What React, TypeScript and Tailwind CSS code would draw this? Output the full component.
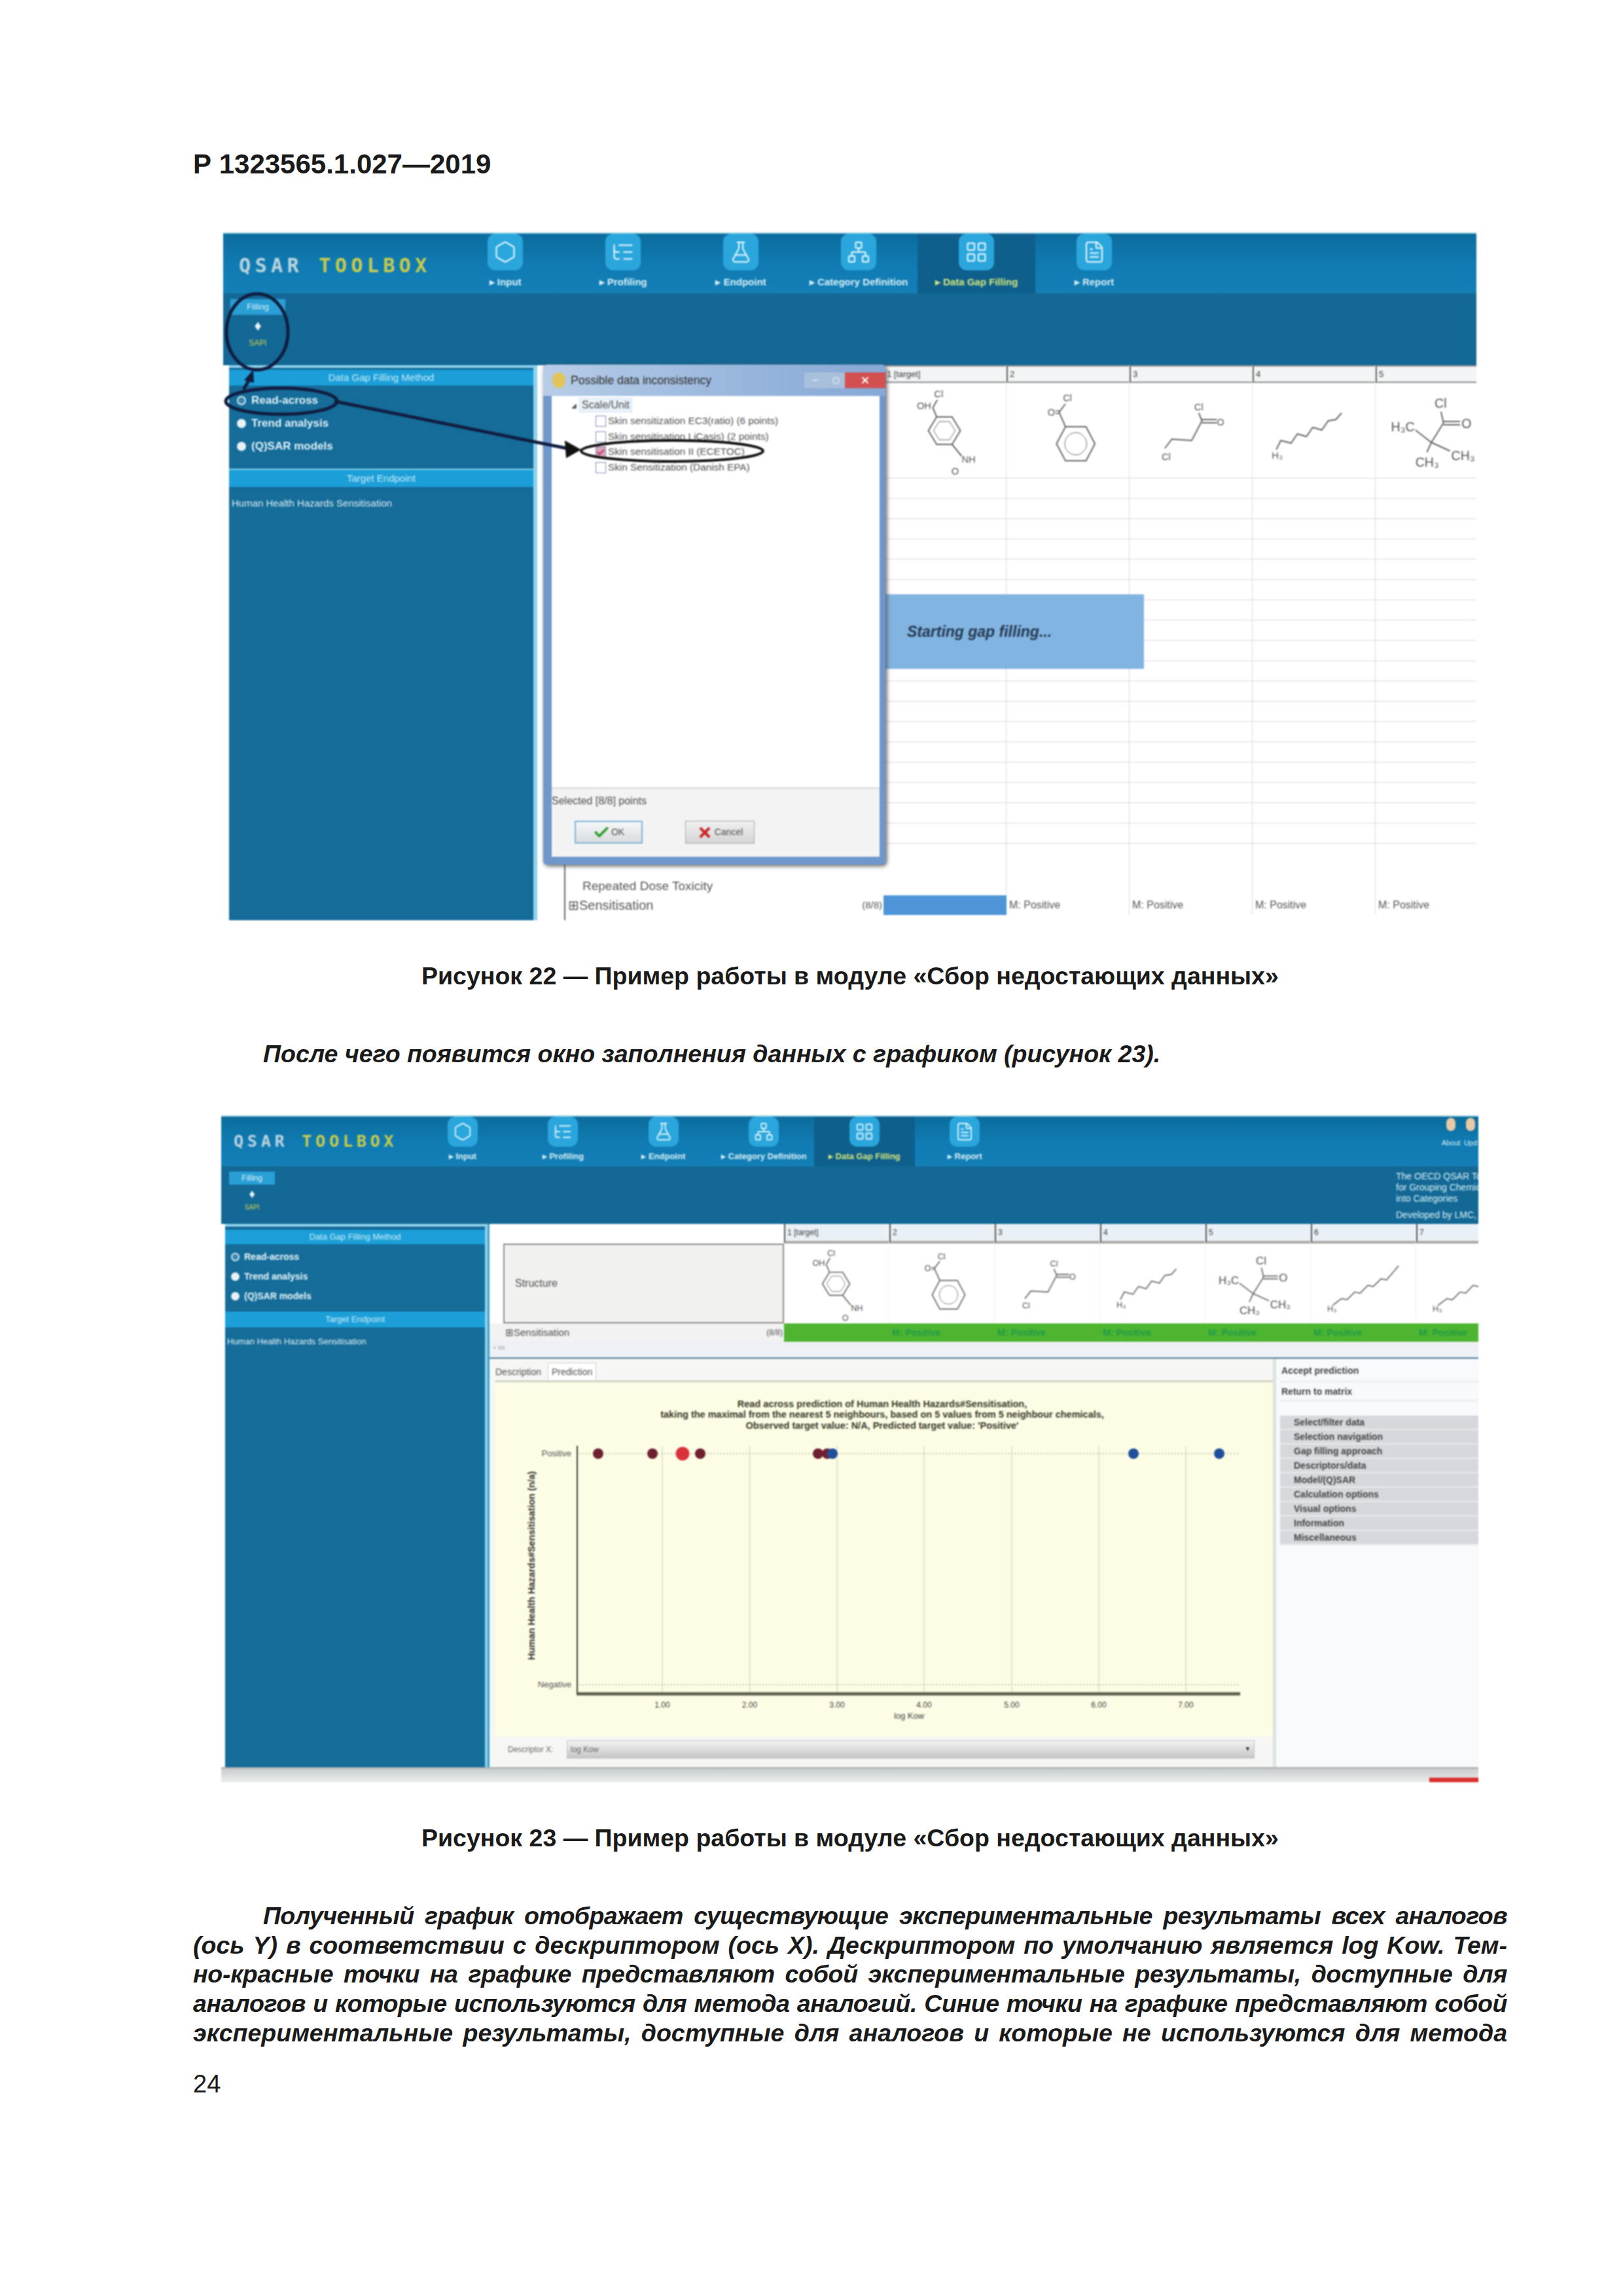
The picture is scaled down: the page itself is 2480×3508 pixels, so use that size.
import { Hexagon, ListTree, FlaskConical, Network, LayoutGrid, FileText, Check, X, Minus, Square } from "lucide-react";

const navItems = [
  { label: "Input", Icon: Hexagon },
  { label: "Profiling", Icon: ListTree },
  { label: "Endpoint", Icon: FlaskConical },
  { label: "Category Definition", Icon: Network },
  { label: "Data Gap Filling", Icon: LayoutGrid, active: true },
  { label: "Report", Icon: FileText },
];

const methods = ["Read-across", "Trend analysis", "(Q)SAR models"];

const sideRows = [
  "Select/filter data",
  "Selection navigation",
  "Gap filling approach",
  "Descriptors/data",
  "Model/(Q)SAR",
  "Calculation options",
  "Visual options",
  "Information",
  "Miscellaneous",
];

const treeRows = [
  { label: "Skin sensitization EC3(ratio) (6 points)" },
  { label: "Skin sensitisation LiCasis) (2 points)" },
  { label: "Skin sensitisation II (ECETOC)", checked: true },
  { label: "Skin Sensitization (Danish EPA)" },
];

function Mol({ n }: { n: number }) {
  const line = { fill: "none", stroke: "#666", strokeWidth: 2 };
  const txt = { fontSize: 15, fill: "#555", fontFamily: "Liberation Sans, sans-serif" };
  const big = { fontSize: 20, fill: "#555", fontFamily: "Liberation Sans, sans-serif" };
  return (
    <svg viewBox="0 0 191 145" preserveAspectRatio="none" className="w-full h-full">
      {n === 1 && (
        <g>
          <polygon points="83,52 107,52 120,73 107,94 83,94 70,73" {...line} />
          <polygon points="87,59 103,59 112,73 103,87 87,87 78,73" {...line} strokeWidth={1} />
          <polyline points="83,52 77,38 84,26" {...line} />
          <polyline points="107,94 122,112" {...line} />
          <text x="79" y="22" {...txt}>Cl</text>
          <text x="52" y="40" {...txt}>OH</text>
          <text x="122" y="122" {...txt}>NH</text>
          <text x="106" y="140" {...txt}>O</text>
        </g>
      )}
      {n === 2 && (
        <g>
          <polygon points="92,67 124,67 138,93 124,119 92,119 78,93" {...line} />
          <circle cx="108" cy="93" r="17" {...line} strokeWidth={1} />
          <polyline points="92,67 82,45 92,32" {...line} />
          <text x="88" y="28" {...txt}>Cl</text>
          <text x="64" y="50" {...txt}>O=</text>
        </g>
      )}
      {n === 3 && (
        <g>
          <polyline points="108,46 113,58 97,88 66,86 55,100" {...line} />
          <path d="M113 56 H136 M113 61 H136" {...line} />
          <text x="101" y="42" {...txt}>Cl</text>
          <text x="136" y="65" {...txt}>O</text>
          <text x="50" y="118" {...txt}>Cl</text>
        </g>
      )}
      {n === 4 && (
        <g>
          <polyline points="37,102 44,88 60,92 70,78 84,82 94,68 108,72 118,58 130,56 139,46 M130 56 L140 68" {...line} />
          <text x="30" y="116" {...txt}>H₃</text>
        </g>
      )}
      {n === 5 && (
        <g>
          <polyline points="106,61 87,91 62,72" {...line} />
          <polyline points="87,91 116,104" {...line} />
          <polyline points="87,91 80,106" {...line} />
          <polyline points="106,61 102,44" {...line} />
          <path d="M106 59 H132 M106 64 H132" {...line} />
          <text x="92" y="38" {...big}>Cl</text>
          <text x="134" y="69" {...big}>O</text>
          <text x="24" y="74" {...big}>H₃C</text>
          <text x="118" y="118" {...big}>CH₃</text>
          <text x="62" y="128" {...big}>CH₃</text>
        </g>
      )}
      {n >= 6 && (
        <g>
          <polyline points="40,112 56,100 66,102 80,88 90,90 104,76 114,78 128,64 138,66 152,50 160,40" {...line} />
          <text x="30" y="124" {...txt}>H₃</text>
        </g>
      )}
    </svg>
  );
}

function Figure22() {
  const cols = [1, 2, 3, 4, 5];
  return (
    <div className="relative ml-[46px] mt-[80px] w-[1915px] h-[1051px] overflow-hidden flex flex-col blur-[1px]">
      <div className="flex h-[93px] bg-gradient-to-b from-[#0c6c9c] via-[#107bb2] to-[#127fb6] border-t-2 border-[#a9d8e8]">
        <div className="w-[341px] pl-[24px] pt-[26px] font-bold text-[30px] tracking-[6.4px] text-[#b9d3df] font-['DejaVu_Sans_Mono',monospace] whitespace-nowrap">
          QSAR <span className="text-[#c6cb4c]">TOOLBOX</span>
        </div>
        {navItems.map(({ label, Icon, active }) => (
          <div key={label} className={`w-[180px] flex flex-col items-center ${active ? "bg-[#0e5f8c]" : ""}`}>
            <div className="w-[54px] h-[56px] rounded-xl bg-[#2aa6dc] flex items-center justify-center">
              <Icon className="w-[36px] h-[36px] text-[#dff4fb]" strokeWidth={1.5} />
            </div>
            <div className={`mt-[7px] text-[15px] font-bold whitespace-nowrap ${active ? "text-[#d2e37a]" : "text-[#d5edf6]"}`}>
              ▸ {label}
            </div>
          </div>
        ))}
      </div>
      <div className="h-[110px] bg-[#136895] pl-[11px] pt-[9px]">
        <div className="w-[84px] h-[24px] bg-[#2a9fd6] text-[#d9f1fa] text-[13px] text-center leading-[24px]">Filling</div>
        <div className="w-[84px] flex flex-col items-center text-[#e4f4f9]">
          <span className="text-[22px] leading-[34px]">♦</span>
          <span className="text-[12px] leading-[18px] text-[#c9cf52]">SAPI</span>
        </div>
      </div>
      <div className="flex-1 flex min-h-0">
        <div className="w-[480px] shrink-0 pl-[9px] bg-white">
          <div className="h-full bg-[#156c99] border-t-4 border-r-[6px] border-[#8fd2ec] flex flex-col">
            <div className="h-[24px] mt-[3px] bg-[#1c9fd8] text-[#c6ecf8] text-[15px] text-center leading-[24px]">Data Gap Filling Method</div>
            <div className="pl-[12px] pt-[14px] h-[127px] flex flex-col gap-[17px]">
              {methods.map((m, i) => (
                <div key={m} className="flex items-center gap-[8px] h-[18px] text-[#e0f2f8] text-[17px] font-bold">
                  <div className={`w-[14px] h-[14px] rounded-full ${i === 0 ? "border-2 border-[#d5e9f1] bg-[#3b87ad]" : "bg-[#e8f2f6]"}`} />
                  {m}
                </div>
              ))}
            </div>
            <div className="h-[28px] bg-[#1c9fd8] border-t-2 border-[#7ccbea] text-[#c6ecf8] text-[15px] text-center leading-[26px]">Target Endpoint</div>
            <div className="pt-[14px] pl-[4px] text-[#dcedf4] text-[15px]">Human Health Hazards Sensitisation</div>
          </div>
        </div>
        <div className="flex-1 min-w-0 bg-white flex flex-col overflow-hidden">
          <div className="flex h-[172px] shrink-0">
            <div className="w-[529px] shrink-0" />
            {cols.map((c) => (
              <div key={c} className="w-[188px] shrink-0 border-r border-[#e3e3e3] flex flex-col">
                <div className="h-[27px] bg-[#f2f4f5] border-y-2 border-[#8d8d8d] border-l-2 border-l-[#666] text-[13px] text-[#444] pl-[3px] leading-[23px]">
                  {c === 1 ? "1 [target]" : c}
                </div>
                <div className="flex-1 min-h-0">
                  <Mol n={c} />
                </div>
              </div>
            ))}
          </div>
          {Array.from({ length: 19 }, (_, i) => (
            <div key={i} className="flex h-[31px] shrink-0">
              <div className="w-[529px] shrink-0" />
              {cols.map((c) => (
                <div key={c} className="w-[188px] shrink-0 border-r border-t border-[#d9d9d9]" />
              ))}
            </div>
          ))}
          <div className="flex h-[49px] shrink-0 text-[#555] text-[19px]">
            <div className="w-[529px] shrink-0 pl-[41px]">
              <div className="h-full border-l-2 border-[#666] pl-[26px] pt-[21px] leading-[28px]">Repeated Dose Toxicity</div>
            </div>
            {cols.map((c) => (
              <div key={c} className="w-[188px] shrink-0 border-r border-[#d9d9d9]" />
            ))}
          </div>
          <div className="flex h-[30px] shrink-0 text-[#555]">
            <div className="w-[529px] shrink-0 pl-[41px] flex">
              <div className="border-l-2 border-[#666] pl-[4px] text-[20px] leading-[30px] flex-1">⊞Sensitisation</div>
              <div className="text-[15px] leading-[30px] pr-[2px]">(8/8)</div>
            </div>
            <div className="w-[188px] shrink-0 bg-[#4d95d6]" />
            {cols.slice(1).map((c) => (
              <div key={c} className="w-[188px] shrink-0 border-r border-[#d9d9d9] pl-[4px] text-[16px] leading-[30px]">M: Positive</div>
            ))}
          </div>
          <div className="flex-1 pl-[41px]">
            <div className="h-full border-l-2 border-[#666]" />
          </div>
        </div>
      </div>

      <div className="absolute left-[1011px] top-[553px] w-[396px] h-[114px] bg-[#82b4e2] flex items-center pl-[34px] text-[#253a52] text-[23px] font-bold italic">
        Starting gap filling...
      </div>

      <div className="absolute left-[489px] top-[202px] w-[523px] h-[764px] bg-[#6f97cb] rounded-md shadow-[2px_2px_6px_#555] flex flex-col pl-[13px] pr-[9px] pb-[12px]">
        <div className="h-[48px] -ml-[13px] pl-[14px] -mr-[9px] flex items-center gap-[8px] text-[#333] text-[17.5px] bg-gradient-to-r from-[#b7cde8] via-[#9cb9de] to-[#86a8d6] rounded-t-md">
          <div className="w-[20px] h-[24px] rounded-full bg-[#e2c45a]" />
          <span className="flex-1">Possible data inconsistency</span>
          <div className="flex items-center">
            <div className="w-[34px] h-[24px] bg-[#a9c0dc] flex items-center justify-center"><Minus className="w-[14px] h-[14px] text-white" /></div>
            <div className="w-[28px] h-[24px] bg-[#a9c0dc] flex items-center justify-center"><Square className="w-[11px] h-[11px] text-white" /></div>
            <div className="w-[62px] h-[24px] bg-[#d2504f] flex items-center justify-center"><X className="w-[16px] h-[16px] text-white" strokeWidth={3} /></div>
          </div>
        </div>
        <div className="flex-1 bg-white pl-[30px] pt-[3px] text-[#555] text-[15.3px]">
          <div className="flex items-center gap-[4px] h-[22px]">
            <span className="text-[10px]">◢</span>
            <span className="bg-[#eaf3fa] border border-[#cfe3f2] px-[3px] text-[16px] leading-[20px]">Scale/Unit</span>
          </div>
          <div className="pl-[37px] pt-[2px] flex flex-col">
            {treeRows.map((r) => (
              <div key={r.label} className="flex items-center gap-[3px] h-[23.5px] whitespace-nowrap">
                <div className={`w-[16px] h-[17px] border border-[#7f86b8] flex items-center justify-center ${r.checked ? "bg-[#d9a3b8]" : "bg-white"}`}>
                  {r.checked && <Check className="w-[14px] h-[14px] text-[#b21c4c]" strokeWidth={3} />}
                </div>
                {r.label}
              </div>
            ))}
          </div>
        </div>
        <div className="h-[106px] bg-[#f3f3f3] border-t-2 border-[#d8d8d8] flex flex-col">
          <div className="text-[16px] text-[#555] leading-[24px] pt-[7px] h-[31px]">Selected [8/8] points</div>
          <div className="flex pl-[35px] pt-[18px] gap-[65px]">
            <div className="w-[104px] h-[35px] border-2 border-[#7eb4d8] bg-gradient-to-b from-[#f5f7f8] to-[#d9dcde] flex items-center justify-center gap-[2px] text-[#555] text-[14px]">
              <Check className="w-[26px] h-[26px] text-[#2e9e2e]" strokeWidth={3.5} /> OK
            </div>
            <div className="w-[106px] h-[35px] border border-[#aaa] bg-gradient-to-b from-[#f0f0f0] to-[#d5d5d5] flex items-center justify-center gap-[3px] text-[#555] text-[14px]">
              <X className="w-[24px] h-[24px] text-[#c62828]" strokeWidth={4} /> Cancel
            </div>
          </div>
        </div>
      </div>

      <svg viewBox="0 0 1915 1051" className="absolute inset-0 w-full h-full pointer-events-none">
        <g fill="none" stroke="#101d40" strokeWidth={5}>
          <ellipse cx="52" cy="152" rx="47" ry="58" />
          <ellipse cx="89" cy="258" rx="85" ry="20" />
          <ellipse cx="686" cy="334" rx="139" ry="16" strokeWidth={4} stroke="#111" />
          <line x1="170" y1="258" x2="525" y2="330" />
          <line x1="31" y1="240" x2="42" y2="222" />
        </g>
        <polygon points="547,332 522,318 524,345" fill="#111" />
        <polygon points="46,210 32,226 47,230" fill="#101d40" />
      </svg>
    </div>
  );
}

const chartXs = [1012, 1145.5, 1279, 1412, 1546, 1679, 1812];
const redDots = [914, 997, 1070, 1250, 1264];
const blueDots = [1272, 1732, 1863];

function Chart() {
  const font = "Liberation Sans, sans-serif";
  return (
    <svg viewBox="757 2112 1188 541" className="w-full h-full">
      <g fontFamily={font} fontWeight={700} fontSize={14.5} fill="#3a3a2a" textAnchor="middle">
        <text x="1348" y="2150">Read across prediction of Human Health Hazards#Sensitisation,</text>
        <text x="1348" y="2166">taking the maximal from the nearest 5 neighbours, based on 5 values from 5 neighbour chemicals,</text>
        <text x="1348" y="2183">Observed target value: N/A, Predicted target value: 'Positive'</text>
      </g>
      {chartXs.map((x, i) => (
        <g key={x}>
          <line x1={x} y1="2209" x2={x} y2="2588" stroke="#d9dcc0" strokeWidth={1.5} />
          <text x={x} y="2609" fontFamily={font} fontSize={12} fill="#444" textAnchor="middle">{`${i + 1}.00`}</text>
        </g>
      ))}
      <line x1="885" y1="2221" x2="1893" y2="2221" stroke="#c2c8a8" strokeWidth={2} strokeDasharray="2 3" />
      <line x1="885" y1="2574" x2="1893" y2="2574" stroke="#c2c8a8" strokeWidth={2} strokeDasharray="2 3" />
      <line x1="882" y1="2209" x2="882" y2="2590" stroke="#3d3d30" strokeWidth={2} />
      <line x1="882" y1="2588" x2="1895" y2="2588" stroke="#5f5f4d" strokeWidth={5} />
      {redDots.map((x) => (
        <circle key={x} cx={x} cy="2221" r="8" fill="#6d2030" />
      ))}
      {blueDots.map((x) => (
        <circle key={x} cx={x} cy="2221" r="8" fill="#1f4f9a" />
      ))}
      <circle cx="1043" cy="2221" r="10.5" fill="#d8313a" />
      <g fontFamily={font} fontSize={13} fill="#555" textAnchor="end">
        <text x="873" y="2225">Positive</text>
        <text x="873" y="2578">Negative</text>
      </g>
      <text x="1389" y="2626" fontFamily={font} fontSize={13} fill="#444" textAnchor="middle">log Kow</text>
      <text transform="translate(817 2392) rotate(-90)" fontFamily={font} fontWeight={700} fontSize={14.4} fill="#333" textAnchor="middle">
        Human Health Hazards#Sensitisation (n/a)
      </text>
    </svg>
  );
}

function Figure23() {
  const cols = [1, 2, 3, 4, 5, 6, 7];
  return (
    <div className="ml-[43px] mt-[72px] w-[1921px] h-[1019px] overflow-hidden flex flex-col blur-[1px]">
      <div className="relative flex h-[78px] bg-gradient-to-b from-[#0c6c9c] via-[#107bb2] to-[#127fb6] border-t-2 border-[#a9d8e8]">
        <div className="w-[292px] pl-[19px] pt-[19px] font-bold text-[25px] tracking-[5.8px] text-[#b9d3df] font-['DejaVu_Sans_Mono',monospace] whitespace-nowrap">
          QSAR <span className="text-[#c6cb4c]">TOOLBOX</span>
        </div>
        {navItems.map(({ label, Icon, active }) => (
          <div key={label} className={`w-[153.5px] flex flex-col items-center ${active ? "bg-[#0e5f8c]" : ""}`}>
            <div className="w-[46px] h-[46px] rounded-xl bg-[#2aa6dc] flex items-center justify-center">
              <Icon className="w-[30px] h-[30px] text-[#dff4fb]" strokeWidth={1.5} />
            </div>
            <div className={`mt-[5px] text-[13px] font-bold whitespace-nowrap ${active ? "text-[#d2e37a]" : "text-[#d5edf6]"}`}>
              ▸ {label}
            </div>
          </div>
        ))}
        <div className="flex-1 flex justify-end gap-[6px] pt-[2px] overflow-hidden">
          {["About", "Upd"].map((l) => (
            <div key={l} className="w-[24px] flex flex-col items-center text-[#d5edf6] text-[11px]">
              <div className="w-[14px] h-[20px] rounded-full bg-[#e8c9a8]" />
              <span className="mt-[10px]">{l}</span>
            </div>
          ))}
        </div>
      </div>
      <div className="flex h-[88px] bg-[#136895]">
        <div className="pl-[12px] pt-[8px] flex-1">
          <div className="w-[70px] h-[20px] bg-[#2a9fd6] text-[#d9f1fa] text-[12px] text-center leading-[20px]">Filling</div>
          <div className="w-[70px] flex flex-col items-center text-[#e4f4f9]">
            <span className="text-[18px] leading-[28px]">♦</span>
            <span className="text-[10px] leading-[14px] text-[#c9cf52]">SAPI</span>
          </div>
        </div>
        <div className="w-[126px] pt-[7px] text-[#d5edf6] text-[14px] leading-[17px] whitespace-nowrap overflow-hidden">
          <div>The OECD QSAR Tool</div>
          <div>for Grouping Chemic</div>
          <div>into Categories</div>
          <div className="mt-[8px]">Developed by LMC, B</div>
        </div>
      </div>

      <div className="flex h-[830px] min-h-0">
        <div className="w-[407px] shrink-0 bg-white pl-[6px]">
          <div className="h-full bg-[#156c99] border-t-4 border-r-4 border-[#8fd2ec] flex flex-col">
            <div className="h-[22px] mt-[5px] bg-[#1c9fd8] text-[#c6ecf8] text-[13px] text-center leading-[22px]">Data Gap Filling Method</div>
            <div className="pl-[9px] pt-[11px] h-[103px] flex flex-col gap-[14px]">
              {methods.map((m, i) => (
                <div key={m} className="flex items-center gap-[7px] h-[16px] text-[#e0f2f8] text-[14px] font-bold">
                  <div className={`w-[13px] h-[13px] rounded-full ${i === 0 ? "border-2 border-[#d5e9f1] bg-[#3b87ad]" : "bg-[#e8f2f6]"}`} />
                  {m}
                </div>
              ))}
            </div>
            <div className="h-[24px] bg-[#1c9fd8] text-[#c6ecf8] text-[13px] text-center leading-[24px]">Target Endpoint</div>
            <div className="pt-[12px] pl-[3px] text-[#dcedf4] text-[13px]">Human Health Hazards Sensitisation</div>
          </div>
        </div>

        <div className="flex-1 min-w-0 flex flex-col bg-[#f3f5f8] border-l-[3px] border-[#3f9fc9]">
          <div className="flex h-[152px] shrink-0 bg-white">
            <div className="w-[450px] shrink-0 pl-[21px] pt-[30px]">
              <div className="h-[122px] border-2 border-[#8c8c8c] bg-[#f1f1ef] flex items-center pl-[16px] text-[16px] text-[#555]">Structure</div>
            </div>
            {cols.map((c) => (
              <div key={c} className="w-[161px] shrink-0 flex flex-col border-r border-[#efefef]">
                <div className="h-[30px] bg-[#e9f1f7] border-b-4 border-b-[#a9a9a5] border-l-2 border-l-[#555] text-[12px] text-[#444] pl-[3px] leading-[26px]">
                  {c === 1 ? "1 [target]" : c}
                </div>
                <div className="flex-1 min-h-0">
                  <Mol n={c} />
                </div>
              </div>
            ))}
          </div>
          <div className="flex h-[28px] shrink-0 bg-[#f2f2f2] text-[#555]">
            <div className="w-[450px] shrink-0 pl-[24px] flex items-center">
              <span className="text-[15px] flex-1">⊞Sensitisation</span>
              <span className="text-[12px] pr-[2px]">(8/8)</span>
            </div>
            {cols.map((c) => (
              <div key={c} className="w-[161px] shrink-0 bg-[#4db52f] text-[#1f9c4a] text-[14px] font-bold leading-[28px] pl-[4px]">
                {c > 1 ? "M: Positive" : ""}
              </div>
            ))}
          </div>
          <div className="h-[26px] shrink-0 bg-[#edf0f4] border-b-2 border-[#4a7d92] pl-[6px] text-[#888] text-[11px]">‹ ▭</div>
          <div className="flex flex-1 min-h-0">
            <div className="w-[1197px] shrink-0 flex flex-col bg-[#f6f7f4]">
              <div className="h-[33px] shrink-0 flex items-end gap-[10px] pl-[9px] text-[14px] text-[#555]">
                <span className="leading-[26px]">Description</span>
                <span className="leading-[26px] px-[5px] bg-white border-x border-t border-[#cfcfcf]">Prediction</span>
              </div>
              <div className="h-[544px] shrink-0 pl-[9px]">
                <div className="h-full bg-[#fdfde6] border-t-[3px] border-[#d2d2c8]">
                  <Chart />
                </div>
              </div>
              <div className="flex-1 flex items-start pl-[28px] pr-[28px] pt-[6px] text-[#666] text-[12px]">
                <span className="w-[90px] leading-[28px]">Descriptor X:</span>
                <div className="flex-1 h-[28px] bg-gradient-to-b from-[#f2f2f2] to-[#c6c6c6] border border-[#c4c4c4] flex items-center justify-between px-[5px]">
                  <span>log Kow</span>
                  <span className="text-[9px] text-[#222]">▼</span>
                </div>
              </div>
            </div>
            <div className="flex-1 min-w-0 bg-[#f8f9fd] border-l-[5px] border-[#dde3dc] pl-[6px] pt-[6px] text-[14px] font-bold text-[#444] whitespace-nowrap">
              <div className="h-[30px] leading-[24px] pl-[2px] border-b-2 border-[#ebebeb]">Accept prediction</div>
              <div className="h-[29px] leading-[28px] pl-[2px] border-b-2 border-[#ebebeb]">Return to matrix</div>
              <div className="mt-[22px] bg-[#d6d8dd]">
                {sideRows.map((r) => (
                  <div key={r} className="h-[22px] leading-[20px] pl-[21px] border-b-2 border-[#eaebee]">{r}</div>
                ))}
              </div>
            </div>
          </div>
        </div>
      </div>
      <div className="flex-1 flex justify-end items-end bg-gradient-to-b from-[#c9cccd] to-[#eceeef] border-t-2 border-[#a9adae]">
        <div className="w-[75px] h-[7px] bg-[#d9322f]" />
      </div>
    </div>
  );
}

const bodyLines = [
  { text: "Полученный график отображает существующие экспериментальные результаты всех аналогов", cls: "pl-[107px] tracking-[-0.6px]" },
  { text: "(ось Y) в соответствии с дескриптором (ось X). Дескриптором по умолчанию является log Kow. Тем-", cls: "" },
  { text: "но-красные точки на графике представляют собой экспериментальные результаты, доступные для", cls: "tracking-[-0.3px]" },
  { text: "аналогов и которые используются для метода аналогий. Синие точки на графике представляют собой", cls: "tracking-[-0.4px]" },
  { text: "экспериментальные результаты, доступные для аналогов и которые не используются для метода", cls: "" },
];

export default function App() {
  return (
    <div className="w-[2480px] h-[3508px] bg-white pt-[225px] pl-[295px] pr-[177px] text-[#1a1a1a] font-['Liberation_Sans',sans-serif] overflow-hidden">
      <div className="h-[50px] text-[42px] font-bold leading-[52px]">Р 1323565.1.027—2019</div>
      <Figure22 />
      <div className="mt-[63px] h-[44px] ml-[349px] text-[37.5px] font-bold leading-[44px] whitespace-nowrap">
        Рисунок 22 — Пример работы в модуле «Сбор недостающих данных»
      </div>
      <div className="mt-[75px] h-[44px] pl-[107px] text-[37.5px] font-bold italic leading-[44px] whitespace-nowrap">
        После чего появится окно заполнения данных с графиком (рисунок 23).
      </div>
      <Figure23 />
      <div className="mt-[63px] h-[44px] ml-[349px] text-[37.5px] font-bold leading-[44px] whitespace-nowrap">
        Рисунок 23 — Пример работы в модуле «Сбор недостающих данных»
      </div>
      <div className="mt-[75px] text-[37.5px] font-bold italic leading-[44.7px]">
        {bodyLines.map((l) => (
          <div key={l.text} className={`[text-align-last:justify] ${l.cls}`}>
            {l.text}
          </div>
        ))}
      </div>
      <div className="mt-[33px] text-[38px] leading-[44px]">24</div>
    </div>
  );
}
